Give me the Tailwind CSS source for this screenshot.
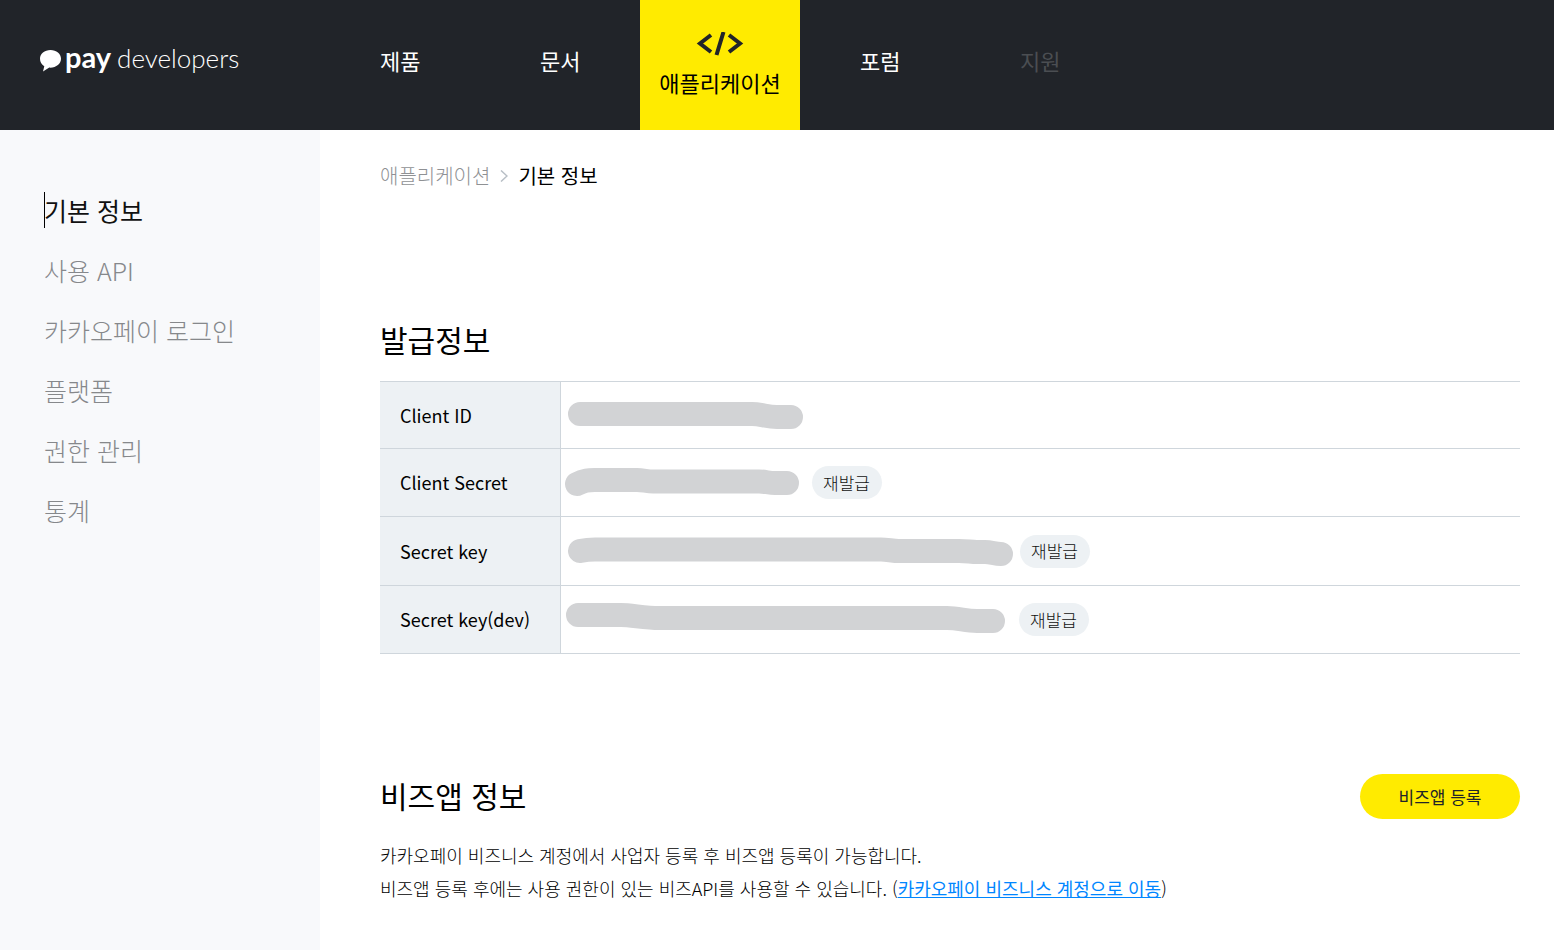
<!DOCTYPE html>
<html lang="ko">
<head>
<meta charset="utf-8">
<meta name="viewport" content="width=device-width, initial-scale=1">
<title>pay developers</title>
<script src="https://cdn.jsdelivr.net/npm/@tailwindcss/browser@4"></script>
</head>
<body class="flex min-h-screen flex-col bg-white font-['Noto_Sans_CJK_KR',sans-serif] text-black">
<header class="flex h-[130px] shrink-0 bg-[#212429] text-white">
  <a href="#" class="flex w-80 shrink-0 items-center gap-1 pb-4 pl-10">
    <svg class="mt-2 h-[22px] w-[21px] shrink-0" viewBox="0 0 21 22" fill="#fff" aria-hidden="true"><path d="M10.500 0C4.600 0 0 3.800 0 8.800C0 12 1.500 14.500 4.300 16.300L3 21.500L9.300 17.600C16 18 21 14 21 8.800C21 3.800 16.400 0 10.500 0Z"/></svg>
    <span class="flex items-baseline gap-[6px] font-['Lato',sans-serif] leading-9 whitespace-nowrap"><b class="text-[29px]">pay</b><span class="text-[26px] font-light">developers</span></span>
  </a>
  <nav class="flex text-[22px] leading-8">
    <a href="#" class="flex w-40 items-center pb-[10px] pl-[60px]">제품</a>
    <a href="#" class="flex w-40 items-center pb-[10px] pl-[60px]">문서</a>
    <a href="#" class="flex w-40 flex-col items-center bg-[#ffeb00] pt-8 text-black">
      <svg class="mb-[2px] h-8 w-12" viewBox="0 0 48 32" fill="none" stroke="#212429" stroke-width="4" aria-hidden="true"><path d="M15 3L4 11.500L15 20M33 3L44 11.500L33 20M27.500 0L20.500 23"/></svg>
      <span>애플리케이션</span>
    </a>
    <a href="#" class="flex w-40 items-center pb-[10px] pl-[60px]">포럼</a>
    <a href="#" class="flex w-40 items-center pb-[10px] pl-[60px] text-[#4b4e52]">지원</a>
  </nav>
</header>
<div class="flex grow">
  <aside class="w-80 shrink-0 bg-[#f8f9fb] pt-[51px]">
    <nav class="flex flex-col pl-11 text-[25px] font-light text-[#86888b]">
      <a href="#" class="relative flex h-[60px] items-center font-normal text-[#111]"><span class="absolute top-[11px] left-0 h-9 w-px bg-black"></span>기본 정보</a>
      <a href="#" class="flex h-[60px] items-center">사용 API</a>
      <a href="#" class="flex h-[60px] items-center">카카오페이 로그인</a>
      <a href="#" class="flex h-[60px] items-center">플랫폼</a>
      <a href="#" class="flex h-[60px] items-center">권한 관리</a>
      <a href="#" class="flex h-[60px] items-center">통계</a>
    </nav>
  </aside>
  <main class="grow pt-8 pr-[34px] pl-[60px]">
    <div class="flex h-7 items-center text-[20px]">
      <a href="#" class="font-light text-[#8f9194]">애플리케이션</a>
      <svg class="mx-[10px] h-3 w-2" viewBox="0 0 8 12" fill="none" stroke="#b8bfc6" stroke-width="1.500" aria-hidden="true"><path d="M1 0.500L7 6L1 11.500"/></svg>
      <span>기본 정보</span>
    </div>
    <h2 class="mt-[129px] text-[30px] leading-10">발급정보</h2>
    <table class="mt-[22px] w-full border-collapse">
      <tbody class="text-[18px]">
        <tr class="h-[67px] border-y border-[#cfd6dc]">
          <th scope="row" class="w-[180px] border-r border-[#cfd6dc] bg-[#edf1f4] p-0 pl-5 text-left font-normal">Client ID</th>
          <td class="p-0"><svg class="block h-[66px] w-[251px]" viewBox="0 0 251 66" fill="none" stroke="#d2d3d5" stroke-width="24" stroke-linecap="round" stroke-linejoin="round" role="img" aria-label="Client ID"><path d="M19 32H191C200 32 206 35 216 35H230"/></svg></td>
        </tr>
        <tr class="h-[68px] border-y border-[#cfd6dc]">
          <th scope="row" class="border-r border-[#cfd6dc] bg-[#edf1f4] p-0 pl-5 text-left font-normal">Client Secret</th>
          <td class="p-0"><div class="flex items-center"><svg class="h-[66px] w-[251px] shrink-0" viewBox="0 0 251 66" fill="none" stroke="#d2d3d5" stroke-width="24" stroke-linecap="round" stroke-linejoin="round" role="img" aria-label="Client Secret"><path d="M16 34C24 29.500 29 30 36 30H76C82 30 86 31.500 92 31.500H198C204 31.500 208 33 214 33H226"/></svg><button type="button" class="h-[33px] w-[70px] rounded-full bg-[#edf1f4] text-[17px] font-light text-[#111]">재발급</button></div></td>
        </tr>
        <tr class="h-[69px] border-y border-[#cfd6dc]">
          <th scope="row" class="border-r border-[#cfd6dc] bg-[#edf1f4] p-0 pl-5 text-left font-normal">Secret key</th>
          <td class="p-0"><div class="flex items-center"><svg class="h-[66px] w-[459px] shrink-0" viewBox="0 0 459 66" fill="none" stroke="#d2d3d5" stroke-width="24" stroke-linecap="round" stroke-linejoin="round" role="img" aria-label="Secret key"><path d="M19 33C24 32 28 31.500 34 31.500H320C326 31.500 332 33 338 33H398C406 33 410 34 416 34H424C430 34 434 36 440 36"/></svg><button type="button" class="h-[33px] w-[70px] rounded-full bg-[#edf1f4] text-[17px] font-light text-[#111]">재발급</button></div></td>
        </tr>
        <tr class="h-[68px] border-y border-[#cfd6dc]">
          <th scope="row" class="border-r border-[#cfd6dc] bg-[#edf1f4] p-0 pl-5 text-left font-normal">Secret key(dev)</th>
          <td class="p-0"><div class="flex items-center"><svg class="h-[66px] w-[458px] shrink-0" viewBox="0 0 458 66" fill="none" stroke="#d2d3d5" stroke-width="24" stroke-linecap="round" stroke-linejoin="round" role="img" aria-label="Secret key(dev)"><path d="M17 28H60C70 28 84 31 98 31H386C398 31 404 34 416 34H432"/></svg><button type="button" class="h-[33px] w-[70px] rounded-full bg-[#edf1f4] text-[17px] font-light text-[#111]">재발급</button></div></td>
        </tr>
      </tbody>
    </table>
    <div class="mt-[120px] flex items-center justify-between">
      <h2 class="pb-1 text-[30px] leading-10">비즈앱 정보</h2>
      <button type="button" class="h-[45px] w-40 rounded-full bg-[#ffeb00] text-[17px] text-[#212429]">비즈앱 등록</button>
    </div>
    <p class="mt-5 text-[18px] leading-[33px] font-light text-black">카카오페이 비즈니스 계정에서 사업자 등록 후 비즈앱 등록이 가능합니다.<br>비즈앱 등록 후에는 사용 권한이 있는 비즈API를 사용할 수 있습니다. (<a href="#" class="font-normal text-[#0086ff] underline">카카오페이 비즈니스 계정으로 이동</a>)</p>
  </main>
</div>
</body>
</html>
